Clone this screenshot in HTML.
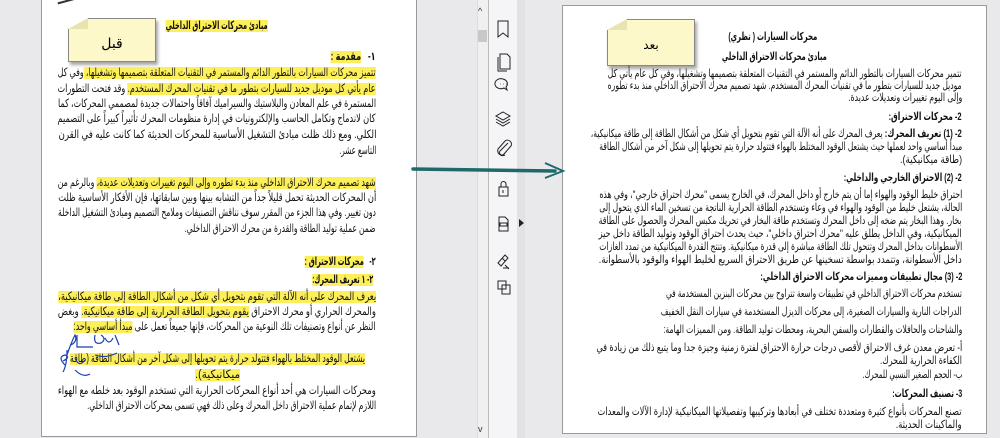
<!DOCTYPE html>
<html><head><meta charset="utf-8"><style>
body{margin:0;width:1000px;height:438px;overflow:hidden;background:#e9e9ec;position:relative;font-family:"Liberation Sans","DejaVu Sans",sans-serif;}
.pg{position:absolute;background:#fff;border:1px solid #9a9a9a;}
.l{position:absolute;direction:rtl;white-space:nowrap;color:#111;line-height:14px;height:14px;}
.l>span{display:inline-block;white-space:nowrap;transform-origin:100% 50%;}
.L{font-size:11.5px;}
.R{font-size:11px;}
.b{font-weight:bold;}
mark{background:#fcef5a;color:#111;}
.note{position:absolute;background:#fdf8c9;border:1px solid #888;box-shadow:2px 3px 3px rgba(0,0,0,.35);font-size:14px;text-align:center;}
.note:before{content:"";position:absolute;left:-1px;top:-1px;width:0;height:0;border-style:solid;border-width:0 0 11px 20px;border-color:transparent transparent #e9e3b0 #fff;}
</style></head><body>
<div class="pg" style="left:41px;top:-1px;width:374px;height:436px"></div>
<div style="position:absolute;left:58px;top:0;width:18px;height:4px;border-top:2px solid #333;transform:rotate(-15deg)"></div>
<div style="position:absolute;left:477px;top:0;width:11px;height:438px;background:#f0f0f0;border-left:1px solid #ddd"></div>
<div style="position:absolute;left:478px;top:30px;width:9px;height:12px;background:#c8c8c8"></div>
<div style="position:absolute;left:478px;top:6px;font-size:9px;color:#333">^</div>
<div style="position:absolute;left:478px;top:424px;font-size:9px;color:#333">v</div>
<div style="position:absolute;left:488px;top:0;width:29px;height:438px;background:#f5f5f7;border-left:1px solid #bbb"></div>
<div style="position:absolute;left:517px;top:0;width:8px;height:438px;background:#e2e2e6"></div>
<svg style="position:absolute;left:493px;top:15px" width="22" height="290" fill="none" stroke="#222" stroke-width="1">
<path d="M5 6h10v16l-5-4-5 4z"/>
<path d="M7 39h7l3 3v12h-10z M5 42v14h9"/>
<path d="M10 64a6 5 0 1 0 1 9l3 2-1-3a6 5 0 0 0-3-8z M7 69h.5 M10 69h.5 M13 69h.5"/>
<path d="M10 97l7 4-7 4-7-4z M3 104l7 4 7-4 M3 107l7 4 7-4"/>
<path d="M15 128l-8 8a2.5 2.5 0 0 0 4 3l7-8a4 4 0 0 0-6-5l-7 8a5 5 0 0 0 7 6"/>
<path d="M6 172h9v9h-9z M8 172v-3a2.5 2.5 0 0 1 5 0v3 M10 175v3"/>
<path d="M6 202h6l3 3v11h-9z M7 208h7v3h-7z"/>
<path d="M5 248l7-8 3 3-7 8z M9 243l3 3 M12 250l4 4 M10 253h6"/>
<path d="M5 266h8v8h-8z M9 270h8v9h-8z"/>
</svg>
<div style="position:absolute;left:519px;top:219px;width:0;height:0;border-style:solid;border-width:4px 0 4px 5px;border-color:transparent transparent transparent #222"></div>
<div class="pg" style="left:562px;top:5px;width:423px;height:427px"></div>
<svg style="position:absolute;left:405px;top:158px" width="165" height="24"><path d="M8 11 L150 13" stroke="#1e6a6a" stroke-width="3.5" stroke-linecap="round"/><path d="M140 5 L158 13 L140 20" fill="none" stroke="#1e6a6a" stroke-width="2"/></svg>

<div class="note" style="left:68px;top:18px;width:86px;height:42px;line-height:48px">قبل</div>
<div class="note" style="left:607px;top:19px;width:86px;height:45px;line-height:50px;font-size:12px">بعد</div>

<div class="l L b" style="top:19px;right:732px;width:102px"><span><mark>مبادئ محركات الاحتراق الداخلي</mark></span></div>
<div class="l L b" style="top:50px;right:624px;width:45px"><span>١- &nbsp; <mark>مقدمة :</mark></span></div>
<div class="l L" style="top:66px;right:624px;width:318px"><span><mark>تتميز محركات السيارات بالتطور الدائم والمستمر في التقنيات المتعلقة بتصميمها وتشغيلها، </mark> وفي كل</span></div>
<div class="l L" style="top:82px;right:624px;width:318px"><span><mark>عام يأتي كل موديل جديد للسيارات بتطور ما في تقنيات المحرك المستخدم.</mark> وقد فتحت التطورات</span></div>
<div class="l L" style="top:97px;right:624px;width:318px"><span>المستمرة في علم المعادن والبلاستيك والسيراميك آفاقاً واحتمالات جديدة لمصممي المحركات، كما</span></div>
<div class="l L" style="top:112px;right:624px;width:318px"><span>كان لاندماج وتكامل الحاسب والإلكترونيات في إدارة منظومات المحرك تأثيراً كبيراً على التصميم</span></div>
<div class="l L" style="top:128px;right:624px;width:318px"><span>الكلي. ومع ذلك ظلت مبادئ التشغيل الأساسية للمحركات الحديثة كما كانت عليه في القرن</span></div>
<div class="l L" style="top:144px;right:624px;width:37px"><span>التاسع عشر.</span></div>
<div class="l L" style="top:176px;right:624px;width:318px"><span><mark>شهد تصميم محرك الاحتراق الداخلي منذ بدء تطوره وإلى اليوم تغييرات وتعديلات عديدة،</mark> وبالرغم من</span></div>
<div class="l L" style="top:191px;right:624px;width:318px"><span>أن المحركات الحديثة تحمل قليلاً جداً من التشابه بينها وبين سابقاتها، فإن الأفكار الأساسية ظلت</span></div>
<div class="l L" style="top:206px;right:624px;width:318px"><span>دون تغيير. وفي هذا الجزء من المقرر سوف نناقش التصنيفات وملامح التصميم ومبادئ التشغيل الداخلة</span></div>
<div class="l L" style="top:222px;right:624px;width:191px"><span>ضمن عملية توليد الطاقة والقدرة من محرك الاحتراق الداخلي.</span></div>
<div class="l L b" style="top:255px;right:624px;width:71px"><span>٢- &nbsp; <mark>محركات الاحتراق :</mark></span></div>
<div class="l L b" style="top:273px;right:627px;width:61px"><span><mark>٢- ١ تعريف المحرك:</mark></span></div>
<div class="l L" style="top:290px;right:624px;width:318px"><span><mark>يعرف المحرك على أنه الآلة التي تقوم بتحويل أي شكل من أشكال الطاقة إلى طاقة ميكانيكية،</mark></span></div>
<div class="l L" style="top:305px;right:624px;width:318px"><span>والمحرك الحراري أو محرك الاحتراق <mark>يقوم بتحويل الطاقة الحرارية إلى طاقة ميكانيكية.</mark> وبغض</span></div>
<div class="l L" style="top:320px;right:624px;width:302px"><span>النظر عن أنواع وتصنيفات تلك النوعية من المحركات، فإنها جميعاً تعمل على <mark>مبدأ أساسي واحد:</mark></span></div>
<div class="l L" style="top:352px;right:635px;width:295px"><span><mark>يشتعل الوقود المختلط بالهواء فتتولد حرارة يتم تحويلها إلى شكل آخر من أشكال الطاقة (طاقة</mark></span></div>
<div class="l L" style="top:368px;right:760px;width:45px"><span><mark>ميكانيكية).</mark></span></div>
<div class="l L" style="top:384px;right:624px;width:318px"><span>ومحركات السيارات هي أحد أنواع المحركات الحرارية التي تستخدم الوقود بعد خلطه مع الهواء</span></div>
<div class="l L" style="top:399px;right:624px;width:289px"><span>اللازم لإتمام عملية الاحتراق داخل المحرك وعلى ذلك فهي تسمى بمحركات الاحتراق الداخلي.</span></div>
<svg style="position:absolute;left:45px;top:330px" width="75" height="50" fill="none" stroke="#1d3fb0" stroke-width="1.2">
<path d="M20 35 q-8-8 0-10 q6 2-2 6 M22 20 q0 15 -4 22 M22 25 q4-12 8-20 q3 6-4 10 M30 40 q8 8 15 4 M30 28 q4 10 10 2"/>
<path d="M32 5 v12 h16 M50 5 q-2 10 6 8 q6-4 0-8 M60 8 q4 8 8 0 M70 5 l4 10"/>
<path d="M50 25 q10 4 22 -2"/>
</svg>

<div class="l R b" style="top:30px;right:183px;width:89px"><span>محركات السيارات ( تظري)</span></div>
<div class="l R b" style="top:50px;right:173px;width:105px"><span>مبادئ محركات الاحتراق الداخلي</span></div>
<div class="l R" style="top:67px;right:38px;width:354px"><span>تتمير محركات السيارات بالتطور الدائم والمستمر في التقنيات المتعلقة بتصميمها وتشغيلها، وفي كل عام يأتي كل</span></div>
<div class="l R" style="top:79px;right:38px;width:354px"><span>موديل جديد للسيارات بتطور ما في تقنيات المحرك المستخدم. شهد تصميم محرك الاحتراق الداخلي منذ بدء تطوره</span></div>
<div class="l R" style="top:91px;right:38px;width:114px"><span>وإلى اليوم تغييرات وتعديلات عديدة.</span></div>
<div class="l R b" style="top:110px;right:38px;width:73px"><span>2- محركات الاحتراق:</span></div>
<div class="l R" style="top:127px;right:38px;width:371px"><span><b>2- (1) تعريف المحرك:</b> يعرف المحرك على أنه الآلة التي تقوم بتحويل أي شكل من أشكال الطاقة إلى طاقة ميكانيكية،</span></div>
<div class="l R" style="top:140px;right:38px;width:363px"><span>مبدأ أساسي واحد لعملها حيث يشتعل الوقود المختلط بالهواء فتتولد حرارة يتم تحويلها إلى شكل آخر من أشكال الطاقة</span></div>
<div class="l R" style="top:153px;right:38px;width:62px"><span>(طاقة ميكانيكية).</span></div>
<div class="l R b" style="top:171px;right:38px;width:118px"><span>2- (2) الاحتراق الخارجي والداخلي:</span></div>
<div class="l R" style="top:188px;right:38px;width:363px"><span>احتراق خليط الوقود والهواء إما أن يتم خارج أو داخل المحرك، في الخارج يسمى "محرك احتراق خارجي"، وفي هذه</span></div>
<div class="l R" style="top:201px;right:38px;width:363px"><span>الحالة، يشتعل خليط من الوقود والهواء في وعاء وتستخدم الطاقة الحرارية الناتجة من تسخين الماء الذي يتحول إلى</span></div>
<div class="l R" style="top:214px;right:38px;width:363px"><span>بخار. وهذا البخار يتم ضخه إلى داخل المحرك وتستخدم طاقة البخار في تحريك مكبس المحرك والحصول على الطاقة</span></div>
<div class="l R" style="top:227px;right:38px;width:363px"><span>الميكانيكية، وفي الداخل يطلق عليه "محرك احتراق داخلي"، حيث يحدث احتراق الوقود وتوليد الطاقة داخل حيز</span></div>
<div class="l R" style="top:240px;right:38px;width:363px"><span>الأسطوانات بداخل المحرك وتتحول تلك الطاقة مباشرة إلى قدرة ميكانيكية. وتنتج القدرة الميكانيكية من تمدد الغازات</span></div>
<div class="l R" style="top:253px;right:38px;width:363px"><span>داخل الأسطوانة، وتتمدد بواسطة تسخينها عن طريق الاحتراق السريع لخليط الهواء والوقود بالأسطوانة.</span></div>
<div class="l R b" style="top:270px;right:38px;width:202px"><span>2- (3) مجال تطبيقات ومميزات محركات الاحتراق الداخلي:</span></div>
<div class="l R" style="top:287px;right:38px;width:296px"><span>تستخدم محركات الاحتراق الداخلي في تطبيقات واسعة تتراوح بين محركات البنزين المستخدمة في</span></div>
<div class="l R" style="top:305px;right:38px;width:301px"><span>الدراجات النارية والسيارات الصغيرة، إلى محركات الديزل المستخدمة في سيارات النقل الخفيف</span></div>
<div class="l R" style="top:323px;right:38px;width:299px"><span>والشاحنات والحافلات والقطارات والسفن البحرية، ومحطات توليد الطاقة. ومن المميزات الهامة:</span></div>
<div class="l R" style="top:341px;right:38px;width:366px"><span>أ- تعرض معدن غرف الاحتراق لأقصى درجات حرارة الاحتراق لفترة زمنية وجيزة جدا وما يتبع ذلك من زيادة في</span></div>
<div class="l R" style="top:354px;right:38px;width:82px"><span>الكفاءة الحرارية للمحرك.</span></div>
<div class="l R" style="top:368px;right:38px;width:100px"><span>ب- الحجم الصغير النسبي للمحرك.</span></div>
<div class="l R b" style="top:387px;right:38px;width:70px"><span>3- تصنيف المحركات:</span></div>
<div class="l R" style="top:405px;right:38px;width:364px"><span>تصنع المحركات بأنواع كثيرة ومتعددة تختلف في أبعادها وتركيبها وتفصيلاتها الميكانيكية لإدارة الآلات والمعدات</span></div>
<div class="l R" style="top:418px;right:38px;width:66px"><span>والماكينات الحديثة.</span></div>
<script>
document.querySelectorAll('.l').forEach(function(d){
  var s=d.firstElementChild; if(!s) return;
  var w=parseFloat(d.style.width), a=s.getBoundingClientRect().width;
  if(w&&a){var r=w/a; if(r>1.1) r=1.1; s.style.transform='scaleX('+r+')';}
});
</script>
</body></html>
